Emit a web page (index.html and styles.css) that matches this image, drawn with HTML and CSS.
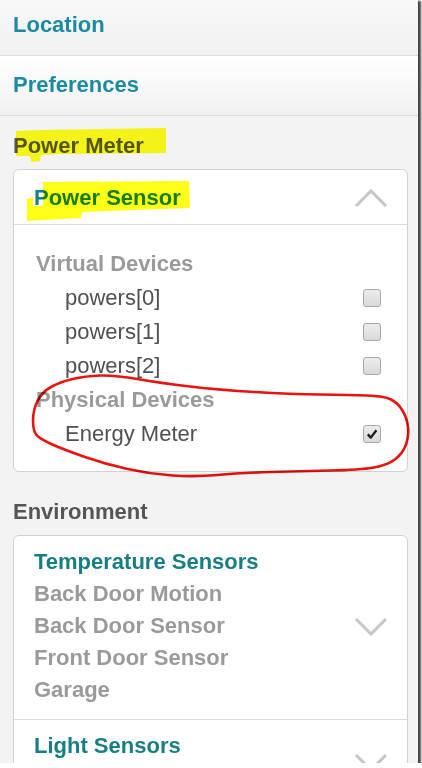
FILE: index.html
```html
<!DOCTYPE html>
<html>
<head>
<meta charset="utf-8">
<title>Preferences</title>
<link rel="stylesheet" href="styles.css">
</head>
<body>
<div class="frame">
  <div class="nav-row nav-first">Location</div>
  <div class="nav-row">Preferences</div>

  <section class="section section-first">
    <h2 class="section-title">Power Meter</h2>
    <div class="card">
      <div class="card-head">
        <span class="head-title">Power Sensor</span>
        <svg class="chevron" width="34" height="19" viewBox="0 0 34 19"><polyline points="2,17 17,2 32,17" fill="none" stroke="#c6c6c6" stroke-width="3"/></svg>
      </div>
      <div class="card-body">
        <div class="group-label">Virtual Devices</div>
        <div class="device"><span>powers[0]</span><span class="checkbox"></span></div>
        <div class="device"><span>powers[1]</span><span class="checkbox"></span></div>
        <div class="device"><span>powers[2]</span><span class="checkbox"></span></div>
        <div class="group-label">Physical Devices</div>
        <div class="device"><span>Energy Meter</span><span class="checkbox checked"><svg width="12" height="12" viewBox="0 0 12 12"><path d="M1.8,6.4 L4.8,9.6 L10.4,2.2" fill="none" stroke="#1e1e1e" stroke-width="2.4" stroke-linejoin="round"/></svg></span></div>
      </div>
    </div>
  </section>

  <section class="section section-env">
    <h2 class="section-title">Environment</h2>
    <div class="card">
      <div class="group">
        <div class="group-list">
          <div class="head-title">Temperature Sensors</div>
          <div class="sensor">Back Door Motion</div>
          <div class="sensor">Back Door Sensor</div>
          <div class="sensor">Front Door Sensor</div>
          <div class="sensor">Garage</div>
        </div>
        <svg class="chevron" width="34" height="19" viewBox="0 0 34 19"><polyline points="2,2 17,17 32,2" fill="none" stroke="#c6c6c6" stroke-width="3"/></svg>
      </div>
      <div class="group group-light">
        <div class="group-list">
          <div class="head-title">Light Sensors</div>
        </div>
        <svg class="chevron" width="34" height="19" viewBox="0 0 34 19"><polyline points="2,2 17,17 32,2" fill="none" stroke="#c6c6c6" stroke-width="3"/></svg>
      </div>
    </div>
  </section>

  <svg class="marks" width="418" height="763" viewBox="0 0 418 763">
    <polygon points="16,131 40,130 100,129 166,128 166,153 60,154 41,155 40,161 31,162 30,156 16,156" fill="#ffff1a"/>
    <polygon points="43,182 189,181 190,208 82,212 81,218 27,221 27,199 33,197 33,206 43,206" fill="#ffff1a"/>
    <path d="M37.5,436 Q33,432 33,421 Q33,410 37.5,401 Q42,392 51,387 Q60,382 72.5,379 Q85,376 100,375.5 Q115,375 137.5,379 Q160,383 190,386.5 Q220,390 255,392 Q290,394 320,394.5 Q350,395 367,395.5 Q384,396 391,399.5 Q398,403 402.5,410.5 Q407,418 408,427 Q409,436 406,444.5 Q403,453 395.5,459 Q388,465 374,467.5 Q360,470 330,470.5 Q300,471 270,472 Q240,473 217.5,475 Q195,477 172.5,475.5 Q150,474 127.5,469 Q105,464 85,457 Q65,450 53.5,445 Q42,440 37.5,436 Z" fill="none" stroke="#e8120f" stroke-width="2.6" stroke-linejoin="round"/>
  </svg>
</div>
</body>
</html>
```
FILE: styles.css
```css
* { box-sizing: border-box; }

body {
  margin: 0;
  background: #ffffff;
  font-family: "Liberation Sans", Arial, sans-serif;
}

.frame {
  position: relative;
  width: 418px;
  height: 763px;
  overflow: hidden;
  background: #f3f3f3;
  box-shadow: 2px 2px 2px 1px rgba(20, 20, 20, 0.8);
}

.nav-row {
  padding: 16px 13px 17px;
  font-size: 22px;
  line-height: 26px;
  font-weight: bold;
  color: #1a8ba0;
  background: linear-gradient(#ffffff, #f1f1f1);
  border-bottom: 1px solid #dcdcdc;
}

.nav-first {
  padding-top: 12px;
  background: linear-gradient(#f8f8f8, #f1f1f1);
}

.section {
  padding: 0 10px 0 13px;
}

.section-first { padding-top: 17px; }
.section-env { padding-top: 27px; }

.section-title {
  margin: 0 0 10px;
  font-size: 22px;
  line-height: 26px;
  font-weight: bold;
  color: #555555;
}

.card {
  background: #ffffff;
  border: 1px solid #d2d2d2;
  border-radius: 6px;
}

.card-head {
  display: flex;
  align-items: center;
  justify-content: space-between;
  padding: 15px 19px 13px 20px;
  border-bottom: 1px solid #dadada;
}

.head-title {
  font-size: 22px;
  line-height: 26px;
  font-weight: bold;
  color: #177e84;
}

.chevron { display: block; flex: none; }

.card-body {
  padding: 22px 26px 20px 22px;
  font-size: 22px;
  line-height: 34px;
}

.group-label {
  font-weight: bold;
  color: #9a9a9a;
}

.device {
  display: flex;
  align-items: center;
  justify-content: space-between;
  padding-left: 29px;
  color: #505050;
}

.checkbox {
  width: 18px;
  height: 18px;
  border: 1px solid #a8a8a8;
  border-radius: 3px;
  background: linear-gradient(#ececec, #d9d9d9);
  display: flex;
  align-items: center;
  justify-content: center;
}

.group {
  display: flex;
  align-items: center;
  justify-content: space-between;
  padding: 10px 19px 13px 20px;
  border-bottom: 1px solid #dadada;
}

.group-list {
  font-size: 22px;
  line-height: 32px;
}

.group-list .head-title { line-height: 32px; }

.sensor {
  font-weight: bold;
  color: #9a9a9a;
}

.group-light {
  min-height: 87px;
  align-items: center;
  border-bottom: none;
}

.group-light .group-list { align-self: flex-start; }

.marks {
  position: absolute;
  top: 0;
  left: 0;
  pointer-events: none;
  mix-blend-mode: multiply;
}
```
